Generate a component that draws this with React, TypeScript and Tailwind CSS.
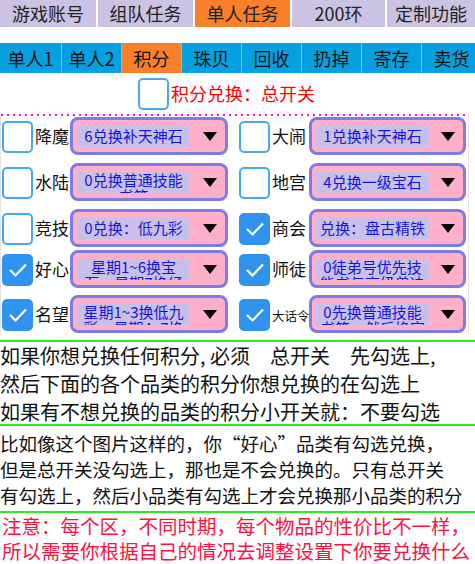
import * as React from "react"

const FONT = { fontFamily: '"Noto Sans CJK SC", "Noto Sans", sans-serif' }

const topTabs = [
  { label: "游戏账号", w: "w-[96px]" },
  { label: "组队任务", w: "w-[95px]" },
  { label: "单人任务", w: "w-[95px]", active: true },
  { label: "200环", w: "w-[93px]" },
  { label: "定制功能", w: "w-[88px]" },
]

const subTabs = ["单人1", "单人2", "积分", "珠贝", "回收", "扔掉", "寄存", "卖货"]

type Item = {
  label: string
  value: string
  checked?: boolean
  wrap?: boolean
  small?: boolean
}

const rows: { h: string; left: Item; right: Item }[] = [
  {
    h: "h-[46px]",
    left: { label: "降魔", value: "6兑换补天神石" },
    right: { label: "大闹", value: "1兑换补天神石" },
  },
  {
    h: "h-[46px]",
    left: { label: "水陆", value: "0兑换普通技能书籍", wrap: true },
    right: { label: "地宫", value: "4兑换一级宝石" },
  },
  {
    h: "h-[41px]",
    left: { label: "竞技场", value: "0兑换：低九彩" },
    right: { label: "商会", value: "兑换：盘古精铁", checked: true },
  },
  {
    h: "h-[45px]",
    left: { label: "好心", value: "星期1~6换宝石，星期7换经验", checked: true, wrap: true },
    right: { label: "师徒", value: "0徒弟号优先技能书与高级兽决", checked: true, wrap: true },
  },
  {
    h: "h-[40px]",
    left: { label: "名望", value: "星期1~3换低九彩，星期4~7换经验", checked: true, wrap: true },
    right: { label: "大话令", value: "0先换普通技能书籍，然后换宝石", checked: true, wrap: true, small: true },
  },
]

function Check({ checked }: { checked?: boolean }) {
  return (
    <div
      className={
        checked
          ? "flex h-[32px] w-[31px] shrink-0 items-center justify-center rounded-[5px] bg-[#3094ee]"
          : "h-[32px] w-[31px] shrink-0 rounded-[5px] border-2 border-[#44a8f4] bg-white"
      }
    >
      {checked ? (
        <svg width="22" height="18" viewBox="0 0 22 18" aria-hidden>
          <polyline points="3,9 8.5,14.5 19,3.5" fill="none" stroke="#fff" strokeWidth="2.2" />
        </svg>
      ) : null}
    </div>
  )
}

function Select({ item, w }: { item: Item; w: string }) {
  return (
    <div
      className={`${w} flex h-[38px] shrink-0 items-center justify-between rounded-[8px] border-[3px] border-[#7c7ce8] bg-[#ffb0c8] pl-[4px] pr-[8px]`}
    >
      <div
        className={`h-[21px] w-[113px] overflow-hidden bg-[#c8c0e8] text-center text-[15px] leading-[16px] text-[#1414e0] ${
          item.wrap ? "pt-0" : "pt-[2px]"
        }`}
      >
        {item.value}
      </div>
      <svg width="14" height="9" viewBox="0 0 14 9" aria-hidden>
        <polygon points="0,0 14,0 7,9" fill="#000" />
      </svg>
    </div>
  )
}

function Cell({ item, labelW, selectW }: { item: Item; labelW: string; selectW: string }) {
  return (
    <div className="flex items-start">
      <div className="mt-[4px]">
        <Check checked={item.checked} />
      </div>
      <div
        className={`${labelW} mt-[6px] shrink-0 overflow-hidden whitespace-nowrap pl-[2px] ${
          item.small ? "pt-[6px] text-[12.5px]" : "text-[17px]"
        } text-[#111]`}
      >
        {item.label}
      </div>
      <Select item={item} w={selectW} />
    </div>
  )
}

export default function App() {
  return (
    <div className="h-[564px] w-[475px] overflow-hidden bg-white" style={FONT}>
      {/* top tabs */}
      <div className="flex h-[27px] gap-[2px]">
        {topTabs.map((t) => (
          <div
            key={t.label}
            className={`${t.w} flex shrink-0 items-center justify-center text-[18px] text-[#222] ${
              t.active ? "bg-[#fa7f2a]" : "bg-[#cbc3e3]"
            }`}
          >
            {t.label}
          </div>
        ))}
      </div>

      {/* sub tabs */}
      <div className="mt-[16px] flex h-[30px] overflow-hidden">
        {subTabs.map((t, i) => (
          <div
            key={t}
            className={`flex shrink-0 items-center justify-center border-r border-[#6cc8ee] text-[18px] text-[#111] ${
              i === 0 ? "w-[62px]" : "w-[60px]"
            } ${t === "积分" ? "bg-[#fa7f2a]" : "bg-[#04a0e0]"}`}
          >
            {t}
          </div>
        ))}
      </div>

      {/* master switch */}
      <div className="flex h-[41px] items-start gap-[2px] pl-[138px] pt-[5px]">
        <Check />
        <div className="pt-[2px] text-[18px] text-[#ff0000]">积分兑换：总开关</div>
      </div>

      {/* category grid */}
      <div className="w-[469px] border-x border-[#e4e4e4]">
        <div className="h-[2px] bg-[repeating-linear-gradient(90deg,#ff00ff_0_2px,transparent_2px_6px)]" />
        <div className="pt-[1px]">
          {rows.map((r, i) => (
            <div key={i} className={`${r.h} flex gap-[11px] pl-[1px]`}>
              <Cell item={r.left} labelW="w-[37px]" selectW="w-[158px]" />
              <Cell item={r.right} labelW="w-[39px]" selectW="w-[157px]" />
            </div>
          ))}
        </div>
      </div>

      {/* notes */}
      <div className="mt-[5px] h-[2px] bg-[#22ee22]" />
      <div className="h-[82px] text-[20px] leading-[28px] text-[#111]">
        <div className="whitespace-nowrap">如果你想兑换任何积分, 必须　总开关　先勾选上,</div>
        <div className="whitespace-nowrap">然后下面的各个品类的积分你想兑换的在勾选上</div>
        <div className="whitespace-nowrap">如果有不想兑换的品类的积分小开关就：不要勾选</div>
      </div>
      <div className="h-[2px] bg-[#22ee22]" />
      <div className="h-[85px] pt-[4px] text-[18.5px] leading-[26px] text-[#111]">
        <div className="whitespace-nowrap">比如像这个图片这样的，你“好心”品类有勾选兑换，</div>
        <div className="whitespace-nowrap">但是总开关没勾选上，那也是不会兑换的。只有总开关</div>
        <div className="whitespace-nowrap">有勾选上，然后小品类有勾选上才会兑换那小品类的积分</div>
      </div>
      <div className="h-[2px] bg-[#22ee22]" />
      <div className="pl-[2px] text-[19.5px] leading-[25px] text-[#ff1040]">
        <div className="whitespace-nowrap">注意：每个区，不同时期，每个物品的性价比不一样，</div>
        <div className="whitespace-nowrap">所以需要你根据自己的情况去调整设置下你要兑换什么</div>
      </div>
    </div>
  )
}
